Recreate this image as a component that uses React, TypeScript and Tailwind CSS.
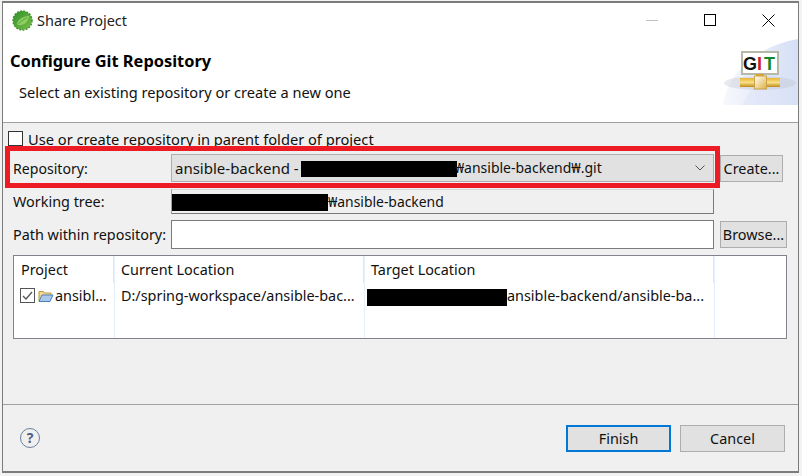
function SpringLogo() {
  return (
    <svg width="21" height="21" viewBox="0 0 22 22" className="shrink-0">
      <defs>
        <linearGradient id="sp" x1="0" y1="0" x2="1" y2="1">
          <stop offset="0" stopColor="#2f8f2a" />
          <stop offset="1" stopColor="#7cc04a" />
        </linearGradient>
      </defs>
      <circle cx="11" cy="11" r="10" fill="url(#sp)" />
      <circle cx="11" cy="11" r="10" fill="none" stroke="#3c8f2e" strokeWidth="1.4" strokeDasharray="2 1.4" />
      <path d="M5 15c1-5 6-8 13-9-1 6-5 10-10 10-1 0-2-.3-3-1z" fill="#8fcf60" />
      <path d="M6 15c3-3 6-5 10-7" stroke="#4c9f38" strokeWidth="1" fill="none" />
    </svg>
  )
}

function BannerArt() {
  return (
    <svg width="76" height="66" viewBox="0 0 76 66" className="shrink-0">
      <defs>
        <linearGradient id="bg" x1="0" y1="0" x2="1" y2="0">
          <stop offset="0" stopColor="#f7f8fd" />
          <stop offset="1" stopColor="#d5dff5" />
        </linearGradient>
        <linearGradient id="pipe" x1="0" y1="0" x2="0" y2="1">
          <stop offset="0" stopColor="#e8b52e" />
          <stop offset="0.5" stopColor="#f8e08a" />
          <stop offset="1" stopColor="#c08a10" />
        </linearGradient>
        <linearGradient id="joint" x1="0" y1="0" x2="1" y2="1">
          <stop offset="0" stopColor="#ffffff" />
          <stop offset="1" stopColor="#e0b040" />
        </linearGradient>
      </defs>
      <path d="M1 66C5 35 35 7 76 0V66Z" fill="url(#bg)" />
      <path d="M20 66C30 45 50 30 76 24V66Z" fill="#dbe3f6" opacity="0.45" />
      <ellipse cx="38" cy="44" rx="36" ry="7" fill="#b9bfcc" opacity="0.35" />
      <rect x="20" y="13" width="36" height="22" fill="#fff" stroke="#b5b9a8" strokeWidth="2" />
      <text x="21" y="31" fontFamily="'Liberation Sans', sans-serif" fontWeight="700" fontSize="18" fill="#111">G</text>
      <text x="35" y="31" fontFamily="'Liberation Sans', sans-serif" fontWeight="700" fontSize="18" fill="#c8202a">I</text>
      <text x="42" y="31" fontFamily="'Liberation Sans', sans-serif" fontWeight="700" fontSize="18" fill="#118a2c">T</text>
      <rect x="34" y="35" width="8" height="4" fill="#d9a521" />
      <rect x="18" y="39" width="40" height="9" fill="url(#pipe)" />
      <rect x="32.5" y="37" width="12" height="13" fill="url(#joint)" stroke="#c9a24a" />
    </svg>
  )
}

function Btn({ label, className = '' }: { label: string; className?: string }) {
  return (
    <div className={`flex shrink-0 items-center justify-center border border-[#adadad] bg-[#e1e1e1] pt-[2px] ${className}`}>
      {label}
    </div>
  )
}

function Redact({ className }: { className: string }) {
  return <span className={`inline-block shrink-0 bg-black ${className}`} />
}

export default function App() {
  return (
    <div className="relative h-[476px] w-[802px] overflow-hidden bg-[#f2f2f2] font-['Noto_Sans','Open_Sans',sans-serif] text-[14.4px] leading-none text-[#111]">
      <div className="ml-[2px] mt-[1px] flex h-[472px] w-[797px] flex-col border-2 border-[#7b7b7b] border-l-[1px] border-r-[1px] bg-[#f0f0f0]">
        {/* title bar + banner */}
        <div className="h-[120px] shrink-0 border-b border-[#a0a0a0] bg-white">
          <div className="flex h-[34px] items-center pl-[9px]">
            <SpringLogo />
            <span className="ml-[4px] text-[14.5px] text-[#222]">Share Project</span>
            <div className="ml-auto flex items-center">
              <div className="h-px w-[12px] bg-[#c0c0c0]" />
              <div className="ml-[46px] h-[12px] w-[12px] border border-black" />
              <svg width="13" height="13" viewBox="0 0 13 13" className="ml-[46px] mr-[23px]">
                <path d="M.5.5l12 12M12.5.5l-12 12" stroke="#000" strokeWidth="1" fill="none" />
              </svg>
            </div>
          </div>
          <div className="flex">
            <div className="min-w-0 flex-1 pl-[7px]">
              <div className="mt-[16px] text-[16.4px] font-bold text-black">Configure Git Repository</div>
              <div className="ml-[9px] mt-[16px] text-[14.6px]">Select an existing repository or create a new one</div>
            </div>
            <div className="mt-[2px]">
              <BannerArt />
            </div>
          </div>
        </div>

        {/* form */}
        <div className="flex h-[126px] shrink-0 flex-col pl-[5px] pr-[10px]">
          <div className="mt-[7px] flex h-[17px] items-center">
            <div className="h-[15px] w-[15px] border border-[#333] bg-white" />
            <span className="ml-[5px] pt-[2px] text-[14.65px]">Use or create repository in parent folder of project</span>
          </div>
          <div className="mt-[7px] flex h-[28px] items-center">
            <span className="w-[163px] shrink-0 pl-[5px] pt-[2px] text-[14.1px]">Repository:</span>
            <div className="flex h-[28px] w-[543px] items-center border border-[#adadad] bg-[#e1e1e1] pl-[3px] pr-[8px]">
              <span className="text-[15px]">ansible-backend -</span>
              <Redact className="ml-[2px] mt-[2px] h-[16px] w-[156px]" />
              <span className="-ml-[2px] text-[14px]">₩ansible-backend₩.git</span>
              <svg width="10" height="6" viewBox="0 0 10 6" className="ml-auto">
                <path d="M.5.5L5 5 9.5.5" stroke="#555" fill="none" />
              </svg>
            </div>
            <Btn label="Create..." className="ml-[6px] h-[27px] w-[63px]" />
          </div>
          <div className="mt-[7px] flex h-[25px] items-center">
            <span className="w-[163px] shrink-0 pl-[5px] pt-px">Working tree:</span>
            <div className="flex h-[25px] w-[543px] items-center border border-b-[#7a7a7a] border-l-[#a0a0a0] border-r-[#7a7a7a] border-t-[#d8d8d8] bg-[#f0f0f0]">
              <Redact className="mt-[1px] h-[17px] w-[156px]" />
              <span className="text-[13.9px]">₩ansible-backend</span>
            </div>
          </div>
          <div className="mt-[6px] flex h-[29px] items-center">
            <span className="w-[163px] shrink-0 pl-[5px] pt-px">Path within repository:</span>
            <div className="h-[29px] w-[543px] border border-[#7a7a7a] bg-white" />
            <Btn label="Browse..." className="ml-[6px] h-[27px] w-[67px]" />
          </div>
        </div>

        {/* table */}
        <div className="ml-[10px] mt-[6px] h-[84px] w-[774px] shrink-0 border border-[#82828c] bg-white">
          <div className="grid h-full grid-cols-[101px_250px_350px_1fr]">
            <div className="border-r border-[#e6eefb]">
              <div className="flex h-[27px] items-center border-r border-[#e5e5e5] pl-[7px] pt-[2px]">Project</div>
              <div className="mt-[1px] flex h-[22px] items-center pl-[6px] pt-[2px]">
                <svg width="16" height="16" viewBox="0 0 16 16" className="shrink-0">
                  <rect x=".5" y=".5" width="14" height="14" fill="#fff" stroke="#555" />
                  <path d="M3 8l3 3 6-7" stroke="#555" strokeWidth="1.3" fill="none" />
                </svg>
                <svg width="16" height="14" viewBox="0 0 16 14" className="ml-[2px] shrink-0">
                  <path d="M1 12V2.5h4.5l1 1.5H13v2" fill="#f5d98c" stroke="#b99a4a" />
                  <path d="M1 12.5l3-6.5h11l-3 6.5z" fill="#a9c8ee" stroke="#4f7fb8" />
                </svg>
                <span className="ml-[1px]">ansibl...</span>
              </div>
            </div>
            <div className="border-r border-[#e6eefb]">
              <div className="flex h-[27px] items-center border-r border-[#e5e5e5] pl-[6px] pt-[2px]">Current Location</div>
              <div className="mt-[1px] flex h-[22px] items-center whitespace-nowrap pl-[6px] pt-[2px]">D:/spring-workspace/ansible-bac...</div>
            </div>
            <div className="border-r border-[#e6eefb]">
              <div className="flex h-[27px] items-center border-r border-[#e5e5e5] pl-[6px] pt-[2px]">Target Location</div>
              <div className="mt-[1px] flex h-[22px] items-center whitespace-nowrap pl-[2px]">
                <Redact className="mt-[4px] h-[17px] w-[140px]" />
                <span className="pt-[2px]">ansible-backend/ansible-ba...</span>
              </div>
            </div>
            <div />
          </div>
        </div>

        {/* footer */}
        <div className="mt-[65px] flex flex-1 border-t border-[#a0a0a0] pl-[17px] pr-[12px]">
          <div className="mt-[23px] flex h-[20px] w-[20px] items-center justify-center rounded-full border-[1.5px] border-[#6c7f9f] text-[14px] font-bold text-[#4c5f80]">?</div>
          <div className="ml-auto mr-px mt-[20px] flex gap-[9px]">
            <Btn label="Finish" className="h-[27px] w-[105px] border-2 !border-[#0078d7]" />
            <Btn label="Cancel" className="h-[27px] w-[105px]" />
          </div>
        </div>
      </div>

      {/* red highlight annotation */}
      <div className="pointer-events-none absolute left-[5px] top-[146px] h-[42px] w-[715px] border-[5px] border-[#ed1c24]" />
    </div>
  )
}
